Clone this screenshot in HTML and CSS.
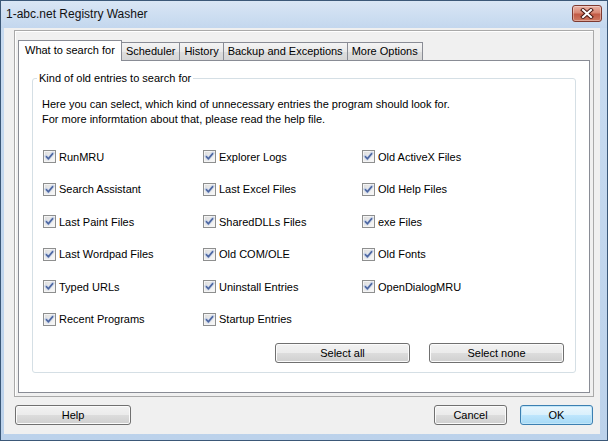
FILE: index.html
```html
<!DOCTYPE html>
<html lang="en">
<head>
  <meta charset="UTF-8">
  <title>1-abc.net Registry Washer</title>
  <link rel="stylesheet" href="styles.css">
</head>
<body>
  <svg class="sprite" width="0" height="0">
    <symbol id="tick" viewBox="0 0 11 11">
      <path d="M2 5.2 L4.4 7.8 L9 2.2" fill="none" stroke="#c9d3e6" stroke-width="3.2" stroke-linecap="round" stroke-linejoin="round"/>
      <path d="M2 5.2 L4.4 7.8 L9 2.2" fill="none" stroke="#4a64a0" stroke-width="1.6" stroke-linejoin="round"/>
    </symbol>
  </svg>

  <div class="window">
    <div class="titlebar">
      <span class="title">1-abc.net Registry Washer</span>
      <button class="close-btn" title="Close">
        <svg width="14" height="11" viewBox="0 0 14 11">
          <path d="M3 2 L11 9 M11 2 L3 9" stroke="#4b1a14" stroke-width="4" stroke-linecap="square"/>
          <path d="M3 2 L11 9 M11 2 L3 9" stroke="#fff" stroke-width="2" stroke-linecap="square"/>
        </svg>
      </button>
    </div>

    <div class="client">
      <div class="tabctl">
        <div class="tabs">
          <div class="tab active">What to search for</div>
          <div class="tab">Scheduler</div>
          <div class="tab">History</div>
          <div class="tab">Backup and Exceptions</div>
          <div class="tab">More Options</div>
        </div>

        <div class="page">
          <fieldset class="group">
            <legend>Kind of old entries to search for</legend>
            <p class="intro">Here you can select, which kind of unnecessary entries the program should look for.<br>For more informtation about that, please read the help file.</p>

            <div class="options">
              <label class="opt"><span class="box"><svg><use href="#tick"/></svg></span>RunMRU</label>
              <label class="opt"><span class="box"><svg><use href="#tick"/></svg></span>Explorer Logs</label>
              <label class="opt"><span class="box"><svg><use href="#tick"/></svg></span>Old ActiveX Files</label>

              <label class="opt"><span class="box"><svg><use href="#tick"/></svg></span>Search Assistant</label>
              <label class="opt"><span class="box"><svg><use href="#tick"/></svg></span>Last Excel Files</label>
              <label class="opt"><span class="box"><svg><use href="#tick"/></svg></span>Old Help Files</label>

              <label class="opt"><span class="box"><svg><use href="#tick"/></svg></span>Last Paint Files</label>
              <label class="opt"><span class="box"><svg><use href="#tick"/></svg></span>SharedDLLs Files</label>
              <label class="opt"><span class="box"><svg><use href="#tick"/></svg></span>exe Files</label>

              <label class="opt"><span class="box"><svg><use href="#tick"/></svg></span>Last Wordpad Files</label>
              <label class="opt"><span class="box"><svg><use href="#tick"/></svg></span>Old COM/OLE</label>
              <label class="opt"><span class="box"><svg><use href="#tick"/></svg></span>Old Fonts</label>

              <label class="opt"><span class="box"><svg><use href="#tick"/></svg></span>Typed URLs</label>
              <label class="opt"><span class="box"><svg><use href="#tick"/></svg></span>Uninstall Entries</label>
              <label class="opt"><span class="box"><svg><use href="#tick"/></svg></span>OpenDialogMRU</label>

              <label class="opt"><span class="box"><svg><use href="#tick"/></svg></span>Recent Programs</label>
              <label class="opt"><span class="box"><svg><use href="#tick"/></svg></span>Startup Entries</label>
            </div>

            <div class="group-actions">
              <button class="btn wide">Select all</button>
              <button class="btn wide">Select none</button>
            </div>
          </fieldset>
        </div>
      </div>

      <div class="footer">
        <button class="btn help">Help</button>
        <button class="btn small push">Cancel</button>
        <button class="btn small default">OK</button>
      </div>
    </div>
  </div>
</body>
</html>
```

FILE: styles.css
```css
body {
  margin: 0;
  font-family: 'Liberation Sans', Arial, sans-serif;
  font-size: 11px;
  color: #000;
}

.sprite {
  display: block;
  width: 0;
  height: 0;
}

.window {
  width: 608px;
  height: 441px;
  box-sizing: border-box;
  border: 1px solid #3b5878;
  background: linear-gradient(#c9dcf1, #bcd2eb);
  display: flex;
  flex-direction: column;
}

.titlebar {
  height: 27px;
  flex: none;
  display: flex;
  align-items: center;
  justify-content: space-between;
  padding-left: 5px;
  background: linear-gradient(#d9e6f5, #c3d7ee);
}

.title {
  font-size: 12px;
  color: #111;
  margin-top: -1px;
}

.close-btn {
  width: 30px;
  height: 17px;
  margin: -2px 5px 0 0;
  padding: 0;
  border: 1px solid #7e3a30;
  border-radius: 3px;
  background: linear-gradient(#eab3a6 0%, #d98874 45%, #c25a45 55%, #cf7a62 100%);
  box-shadow: inset 0 0 0 1px rgba(255, 255, 255, 0.35);
  display: flex;
  align-items: center;
  justify-content: center;
}

.client {
  flex: 1;
  margin: 0 7px 6px 3px;
  background: #f0f0f0;
  display: flex;
  flex-direction: column;
}

.tabctl {
  flex: 1;
  margin: 2px 6px 0 10px;
  border: 1px solid #a9a9a9;
  box-shadow: inset 1px 1px 0 #fff;
  padding: 9px 3px 3px;
  display: flex;
  flex-direction: column;
}

.tabs {
  height: 20px;
  display: flex;
  align-items: flex-end;
  position: relative;
  z-index: 1;
}

.tab {
  height: 18px;
  box-sizing: border-box;
  padding: 0 4px;
  line-height: 17px;
  border: 1px solid #898c95;
  border-bottom: none;
  margin-left: -1px;
  background: linear-gradient(#f4f4f4, #e9e9e9 50%, #dedede 50%, #d6d6d6);
  white-space: nowrap;
}

.tab.active {
  height: 21px;
  margin: 0 0 -1px 0;
  padding: 0 6px;
  line-height: 18px;
  background: #fff;
}

.page {
  flex: 1;
  border: 1px solid #898c95;
  background: #fff;
  padding: 11px 13px 0;
}

.group {
  margin: 0;
  padding: 0 11px 9px 9px;
  border: 1px solid #d5dfe5;
  border-radius: 3px;
}

.group legend {
  padding: 0 2px;
  margin-left: -5px;
  line-height: 13px;
}

.intro {
  margin: 12px 0 0;
  line-height: 15px;
}

.options {
  margin-top: 23px;
  display: grid;
  grid-template-columns: 160px 159px 1fr;
  grid-auto-rows: 13px;
  row-gap: 19.6px;
}

.opt {
  display: flex;
  align-items: center;
  gap: 3px;
  margin-left: 1px;
  white-space: nowrap;
}

.box {
  width: 13px;
  height: 13px;
  box-sizing: border-box;
  border: 1px solid #8e8f8f;
  background: linear-gradient(135deg, #dcdcdc, #fafafa);
  box-shadow: inset 0 0 0 1px #f4f4f4;
  display: flex;
  align-items: center;
  justify-content: center;
}

.box svg {
  width: 11px;
  height: 11px;
}

.group-actions {
  margin-top: 17px;
  display: flex;
  justify-content: flex-end;
  gap: 19px;
}

.btn {
  height: 20px;
  padding: 0;
  font-family: 'Liberation Sans', Arial, sans-serif;
  font-size: 11px;
  color: #000;
  border: 1px solid #707070;
  border-radius: 3px;
  background: linear-gradient(#f2f2f2 0%, #ebebeb 50%, #dddddd 50%, #cfcfcf 100%);
  box-shadow: inset 0 0 0 1px #fbfbfb;
}

.btn.wide {
  width: 135px;
}

.footer {
  height: 37px;
  flex: none;
  box-sizing: border-box;
  display: flex;
  align-items: flex-start;
  gap: 13px;
  padding: 8px 7px 0 11px;
}

.btn.help {
  width: 116px;
  height: 20px;
}

.btn.small {
  width: 73px;
  height: 20px;
}

.btn.push {
  margin-left: auto;
}

.btn.default {
  border-color: #3c7fb1;
  background: linear-gradient(#eaf6fd 0%, #d9f0fc 50%, #bee6fd 50%, #a7d9f5 100%);
  box-shadow: inset 0 0 0 1px #c2e6f8;
}
```
